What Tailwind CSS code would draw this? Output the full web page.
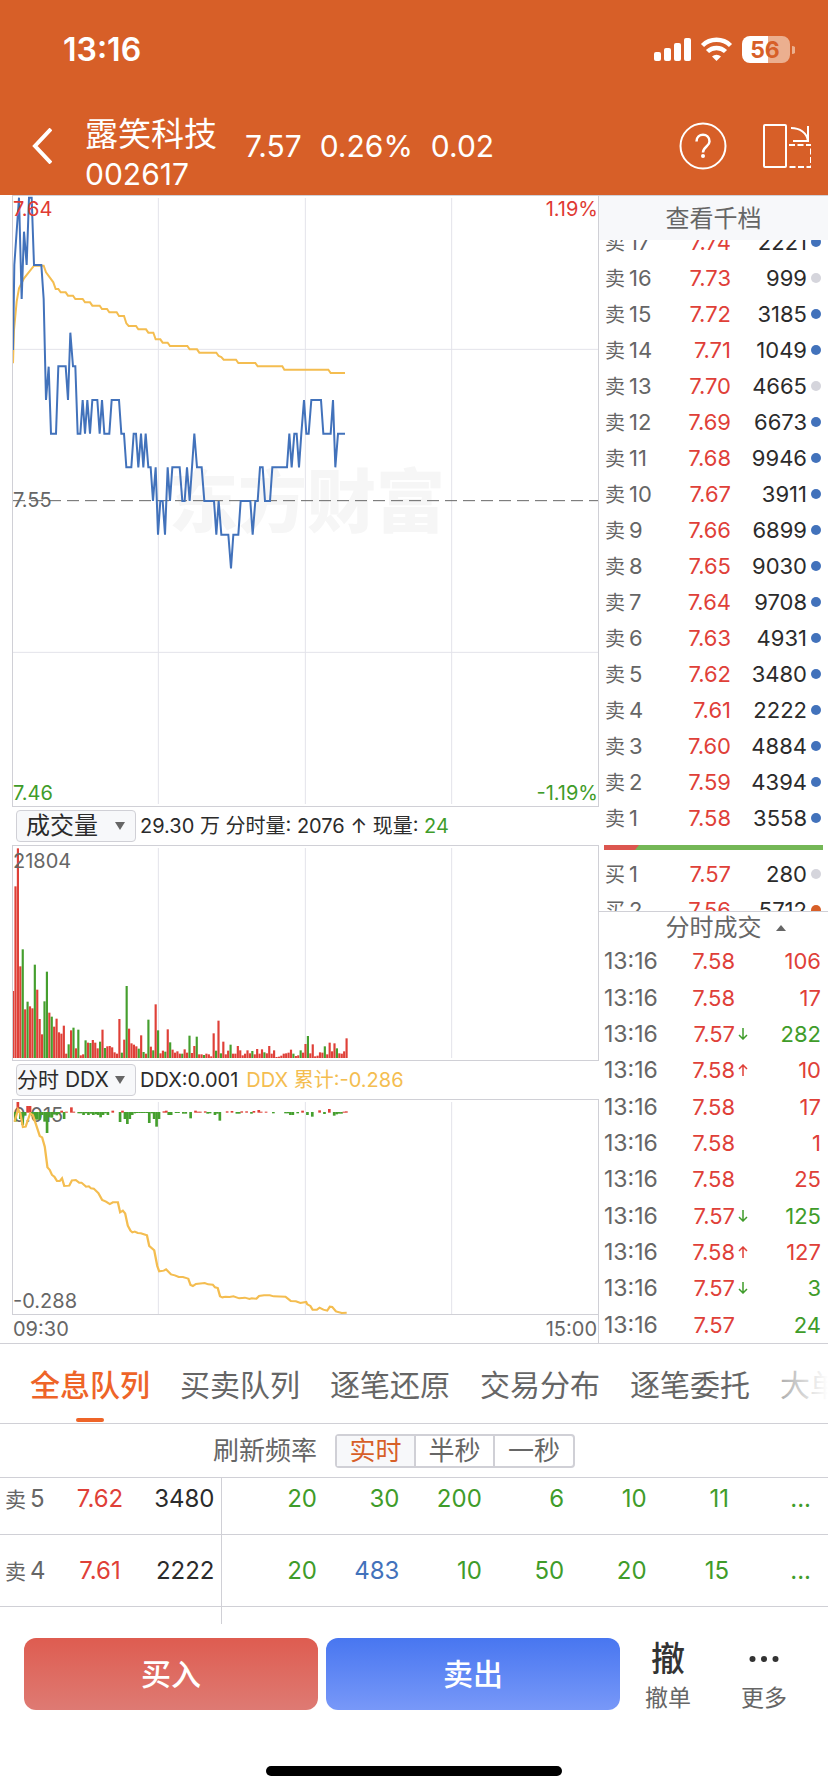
<!DOCTYPE html>
<html lang="zh-CN">

<head>
    <meta charset="UTF-8">
    <meta name="viewport" content="width=device-width, initial-scale=1.0">
    <title>露笑科技 002617</title>
    <script src="https://cdn.jsdelivr.net/npm/@tailwindcss/browser@4"></script>
</head>

<body class="bg-white text-[#2b2b2b] font-['Inter','Noto_Sans_CJK_SC',sans-serif] overflow-x-hidden">
    <header class="bg-[#d75f28] text-white">
        <!-- Status bar -->
        <div class="flex items-center justify-between h-[100px] pl-[63px] pr-[33px]">
            <span class="text-[32px] font-semibold">13:16</span>
            <svg class="w-[142px] h-[28px]" viewBox="0 0 142 28" fill="#fff">
                <rect x="1" y="16" width="7" height="9" rx="2" />
                <rect x="11" y="12" width="7" height="13" rx="2" />
                <rect x="21" y="7" width="7" height="18" rx="2" />
                <rect x="31" y="2" width="7" height="23" rx="2" />
                <path d="M63.500 25l-4.500-4.500a6.500 6.500 0 0 1 9 0z" />
                <path d="M54.500 15.500a13 13 0 0 1 18 0M49.500 9.500a20 20 0 0 1 28 0" fill="none" stroke="#fff" stroke-width="4.500" />
                <path d="M97 0h18v27h-18a8 8 0 0 1-8-8v-11a8 8 0 0 1 8-8z" />
                <path d="M115 0h14a8 8 0 0 1 8 8v11a8 8 0 0 1-8 8h-14zM139 10a4 4 0 0 1 0 8z" fill="#ebaf8f" />
                <text x="112" y="22" text-anchor="middle" font-size="23" font-weight="700" fill="#d75f28">56</text>
            </svg>
        </div>
        <!-- Stock title -->
        <div class="flex items-center h-[95px] pl-8 pr-[17px] pb-1">
            <button aria-label="返回">
                <svg class="w-5 h-9" viewBox="0 0 20 36" fill="none" stroke="#fff" stroke-width="4">
                    <path d="M19 1L3 18l16 17" />
                </svg>
            </button>
            <div class="ml-[33px] mt-4 leading-[40px]">
                <h1 class="text-[33px]">露笑科技</h1>
                <p class="text-[30px]">002617</p>
            </div>
            <div class="flex gap-[18px] ml-7 text-[30px] leading-[40px]">
                <span>7.57</span>
                <span>0.26%</span>
                <span>0.02</span>
            </div>
            <button class="ml-auto" aria-label="帮助">
                <svg class="size-[48px]" viewBox="0 0 48 48" fill="none" stroke="#fff" stroke-width="2">
                    <circle cx="24" cy="24" r="22.500" />
                    <path d="M17.500 19.500c0-9 13-9 13 0c0 5-6.500 5-6.500 11" stroke-width="2.500" />
                    <circle cx="24" cy="34" r="2" fill="#fff" stroke="none" />
                </svg>
            </button>
            <button class="ml-9" aria-label="横屏">
                <svg class="w-[48px] h-[46px]" viewBox="0 0 48 46" fill="none" stroke="#fff" stroke-width="2">
                    <rect x="1" y="2" width="22" height="42" rx="1" />
                    <path d="M28 5c9 0 16 5 17 13M45 3v15H30" />
                    <path d="M26 22h22v22H24" stroke-dasharray="6 2.500" />
                </svg>
            </button>
        </div>
    </header>

    <main>
        <section class="flex border-b border-[#d0d0d6]">
            <!-- Charts -->
            <div class="flex-1 min-w-0 pl-3 text-xl text-[#666]">
                <div class="relative h-[612px] border border-[#d0d0d6]">
                    <div class="absolute top-[266px] left-[156px] text-[69px] leading-[80px] font-black text-[#f6f6f6]">东方财富</div>
                    <svg class="absolute inset-0 size-full" viewBox="39 18 1755 1830" preserveAspectRatio="none" fill="none">
                        <g stroke="#e3e3ea" stroke-width="3">
                            <path d="M475 24V1842M916 24V1842M1355 24V1842M39 478H1794M39 1387H1794" />
                        </g>
                        <path d="M39 932H1794" stroke="#666" stroke-width="3" stroke-dasharray="36 18" />
                        <polyline stroke="#f4bd50" stroke-width="6" points="39,520 42,420 50,335 57,295 72,265 102,227 131,227 138,247 160,277 167,297 175,297 182,307 197,307 204,317 219,317 226,327 248,327 255,337 270,337 277,347 299,347 306,357 321,357 328,367 350,367 357,378 372,378 379,400 386,408 408,408 415,418 438,418 445,428 460,428 467,448 481,448 488,458 503,458 510,468 562,468 569,478 591,478 598,488 649,488 656,498 664,501 671,509 708,509 715,519 766,519 773,529 847,529 853,539 985,539 992,549 1035,549" />
                        <polyline stroke="#4272bb" stroke-width="6" points="39,480 43,225 57,23 65,327 72,125 80,225 87,23 95,23 102,225 124,225 131,327 138,630 146,530 153,731 168,731 175,529 197,529 204,630 211,428 219,529 226,529 233,731 241,731 248,630 255,731 262,630 270,731 277,630 292,630 299,731 306,630 313,731 328,731 335,630 357,630 364,731 372,731 379,832 394,832 401,731 408,731 415,832 423,731 430,832 437,731 445,832 452,832 459,933 467,832 474,1034 481,933 488,933 495,1034 503,832 510,933 517,832 539,832 547,933 554,933 561,832 569,933 583,731 591,832 605,832 613,933 642,933 649,1034 656,933 664,1034 685,1034 693,1135 700,1034 715,1034 722,933 751,933 758,1034 766,933 773,933 780,832 788,832 795,933 810,933 817,832 861,832 868,731 875,832 883,731 890,731 897,832 904,731 912,630 919,731 926,731 934,630 963,630 970,731 992,731 999,630 1006,832 1014,731 1035,731" />
                    </svg>
                    <span class="absolute top-0 left-0 leading-[26px] text-[#e03a33]">7.64</span>
                    <span class="absolute top-0 right-0 leading-[26px] text-[#e03a33]">1.19%</span>
                    <span class="absolute top-[291px] left-0 leading-[26px]">7.55</span>
                    <span class="absolute bottom-0 left-0 leading-[26px] text-[#3f9c2a]">7.46</span>
                    <span class="absolute bottom-0 right-0 leading-[26px] text-[#3f9c2a]">-1.19%</span>
                </div>

                <div class="flex items-center h-[38px] pl-1 gap-1 whitespace-nowrap">
                    <div class="relative">
                        <select aria-label="副图指标一" class="appearance-none w-[120px] h-8 pl-[9px] rounded border border-[#d0d0d6] bg-[#f7f8fa] text-2xl leading-7 text-[#2b2b2b]">
                            <option>成交量</option>
                        </select>
                        <svg class="absolute top-3 right-[11px] w-[10px] h-2 pointer-events-none" viewBox="0 0 10 8" fill="#666"><path d="M0 0h10l-5 8z" /></svg>
                    </div>
                    <p class="text-[#2b2b2b]">29.30 万 分时量: 2076 ↑ 现量: <span class="text-[#3f9c2a]">24</span></p>
                </div>

                <div class="relative h-[216px] border border-[#d0d0d6]">
                    <svg class="absolute inset-0 size-full" viewBox="39 168 1755 642" preserveAspectRatio="none">
                        <path d="M475 174V804M916 174V804M1355 174V804" stroke="#e3e3ea" stroke-width="3" />
                        <g id="volBars"></g>
                    </svg>
                    <span class="absolute top-[2px] left-0 leading-[26px]">21804</span>
                </div>

                <div class="flex items-center h-[38px] pl-1 gap-1 whitespace-nowrap">
                    <div class="relative">
                        <select aria-label="副图指标二" class="appearance-none w-[120px] h-8 rounded border border-[#d0d0d6] bg-[#f7f8fa] text-[21px] leading-7 text-[#2b2b2b]">
                            <option>分时 DDX</option>
                        </select>
                        <svg class="absolute top-3 right-[11px] w-[10px] h-2 pointer-events-none" viewBox="0 0 10 8" fill="#666"><path d="M0 0h10l-5 8z" /></svg>
                    </div>
                    <p class="flex gap-2 text-[#2b2b2b]"><span>DDX:0.001</span><span class="text-[#f4bd50]">DDX 累计:-0.286</span></p>
                </div>

                <div class="relative h-[216px] border border-[#d0d0d6]">
                    <span class="absolute top-[2px] left-0 leading-[26px]">0.015</span>
                    <span class="absolute bottom-0 left-0 leading-[26px]">-0.288</span>
                    <svg class="absolute inset-0 size-full" viewBox="39 150 1755 642" preserveAspectRatio="none" fill="none">
                        <path d="M475 156V792M916 156V792M1355 156V792" stroke="#e3e3ea" stroke-width="3" />
                        <g id="ddxBars"></g>
                        <g transform="scale(1.148 1)">
                            <polyline stroke="#f4bd50" stroke-width="6" points="38,215 47,178 53,190 60,231 67,230 79,190 86,195 104,258 110,262 117,290 124,352 130,360 136,375 142,380 149,393 156,393 162,385 168,408 181,407 188,391 198,390 207,398 213,398 225,410 232,409 238,415 245,416 257,429 267,450 277,455 287,462 295,457 308,457 314,487 321,482 327,490 334,527 341,542 346,547 352,545 360,549 368,550 384,556 390,588 403,601 411,648 416,664 428,662 434,658 447,673 457,676 467,681 478,681 492,686 498,705 504,708 512,702 535,699 544,703 556,704 562,712 569,714 575,739 581,742 589,740 600,741 610,739 625,745 640,743 652,747 658,745 670,746 677,738 690,736 705,736 715,739 746,740 760,753 773,754 785,759 800,756 803,763 811,768 817,779 828,779 835,773 845,779 855,782 862,770 868,771 878,784 893,789 906,788" />
                        </g>
                    </svg>
                </div>
                <div class="flex justify-between h-7 leading-7 px-px border-r border-[#d0d0d6]">
                    <span>09:30</span>
                    <span>15:00</span>
                </div>
            </div>

            <!-- Order book -->
            <aside class="w-[229px] shrink-0 text-[22px] leading-7 border-t border-[#d0d0d6]">
                <button class="block w-full h-11 pt-[2px] bg-[#f7f8fa] text-2xl text-[#666]">查看千档</button>
                <div class="h-[671px] overflow-hidden">
                    <table class="w-full -mt-4">
                        <tbody id="asks"></tbody>
                    </table>
                    <div class="h-5 pt-[9px] pl-[5px] pr-[5px]">
                        <svg class="w-full h-[5px]" viewBox="0 0 219 5" preserveAspectRatio="none">
                            <path d="M0 0h219v5h-219z" fill="#74b756" />
                            <path d="M0 0h35l-4 5h-31z" fill="#dc564f" />
                        </svg>
                    </div>
                    <table class="w-full">
                        <tbody id="bids"></tbody>
                    </table>
                </div>
                <button class="flex items-center justify-center gap-[14px] w-full h-8 pl-[24px] border-t border-[#d0d0d6] text-2xl text-[#666]">
                    分时成交
                    <svg class="w-[10px] h-[6px]" viewBox="0 0 10 6" fill="#666"><path d="M0 6l5-6l5 6z" /></svg>
                </button>
                <table class="w-full h-[400px]">
                    <tbody id="trades"></tbody>
                </table>
            </aside>
        </section>

        <!-- Tabs -->
        <nav class="relative flex gap-[30px] h-20 pl-[30px] overflow-hidden whitespace-nowrap border-b border-[#d0d0d6] text-[30px] text-[#666]">
            <a href="#" class="flex flex-col items-center shrink-0 font-medium text-[#ee6428]">
                <span class="leading-[82px] h-[74px]">全息队列</span>
                <span class="w-7 h-1 shrink-0 rounded-full bg-[#ee6428]"></span>
            </a>
            <a href="#" class="leading-[82px] shrink-0">买卖队列</a>
            <a href="#" class="leading-[82px] shrink-0">逐笔还原</a>
            <a href="#" class="leading-[82px] shrink-0">交易分布</a>
            <a href="#" class="leading-[82px] shrink-0">逐笔委托</a>
            <a href="#" class="leading-[82px] shrink-0">大单</a>
            <div class="absolute inset-y-0 right-0 w-[72px] bg-linear-to-r from-white/20 to-white"></div>
        </nav>

        <!-- Refresh rate -->
        <div class="flex items-center justify-center gap-[18px] h-[54px] pr-10 border-b border-[#d0d0d6] text-[26px] text-[#666]">
            <span>刷新频率</span>
            <div class="flex h-[34px] rounded border-2 border-[#d0d0d6] leading-[28px] divide-x-2 divide-[#d0d0d6]">
                <button class="w-[79px] bg-[#f7f8fa] text-[#d75f28]">实时</button>
                <button class="w-[79px]">半秒</button>
                <button class="w-[78px]">一秒</button>
            </div>
        </div>

        <!-- Order queue -->
        <div class="h-[146px] overflow-hidden">
            <table class="w-full table-fixed -mt-4 text-2xl text-right text-[#3f9c2a]">
                <colgroup>
                    <col class="w-[60px]">
                    <col class="w-[80px]">
                    <col class="w-[81px]">
                    <col class="w-[96px]">
                    <col span="5">
                    <col class="w-[99px]">
                </colgroup>
                <tbody id="queue"></tbody>
            </table>
        </div>
    </main>

    <footer class="pt-[14px] pb-4">
        <div class="flex gap-2 pl-6 pr-4">
            <button class="flex-1 h-[72px] rounded-xl bg-linear-to-b from-[#de5c50] to-[#de7a73] text-[30px] font-medium text-white">买入</button>
            <button class="flex-1 h-[72px] rounded-xl bg-linear-to-b from-[#4876f0] to-[#7898f8] text-[30px] font-medium text-white">卖出</button>
            <button class="flex flex-col items-center w-[80px] h-[72px] text-[#666]">
                <span class="h-[44px] shrink-0 text-[34px] leading-[42px] font-medium text-[#333]">撤</span>
                <span class="text-[23px] leading-[32px]">撤单</span>
            </button>
            <button class="flex flex-col items-center w-[96px] h-[72px] text-[#666]">
                <svg class="w-[30px] h-[44px] shrink-0" viewBox="0 0 30 44" fill="#333">
                    <circle cx="3.500" cy="21" r="3" />
                    <circle cx="15" cy="21" r="3" />
                    <circle cx="26.500" cy="21" r="3" />
                </svg>
                <span class="text-[23px] leading-[32px]">更多</span>
            </button>
        </div>
        <div class="w-[296px] h-[10px] mx-auto mt-14 rounded-full bg-black"></div>
    </footer>

    <script>
        const RED = "#df4038";
        const GREEN = "#459f2e";

        // Volume per minute, "-" marks a falling minute
        const volume = [201, 515, 629, 275, -326, 146, -169, 155, 149, -280, 205, 117, 71, -170, -259, 136, -124, 94, 118, 77, 73, 97,
            13, -41, 83, -91, 29, -85, 8, 11, -53, 46, -45, 54, 46, 29, -49, 85, -30, 35, 36, 32, 17, 13, 117, -16, 55, -216, 88, 44,
            40, 35, -28, 68, -18, 13, -115, 34, -23, 161, -83, 14, 22, -19, 86, -47, 25, 16, 20, 13, -13, 26, 16, -67, 15, 36, -64, 11,
            11, -9, 13, 11, 5, 74, -22, 112, -14, 49, 11, 22, -40, 13, 13, 36, 23, 8, 13, 23, 14, -21, 11, 27, 13, 26, -17, 14, 36,
            13, 23, 3, 4, 7, 13, 14, 16, 25, -13, 6, 8, -23, 16, 42, -66, 14, 41, 5, 7, 17, 16, -35, 11, 46, 20, 44, -29, 14, 13, 20, 59];
        document.getElementById("volBars").innerHTML = volume.map((v, i) =>
            `<rect x="${36 + i * 7.25}" y="${804 - Math.abs(v)}" width="6.5" height="${Math.abs(v)}" fill="${v < 0 ? GREEN : RED}"/>`).join("");

        // DDX per minute as [minute, value]
        const ddx = [[1, -28], [2, 31], [3, -20], [4, -38], [5, -10], [6, 19], [7, 19], [8, -10], [9, -22], [10, -22], [11, -22],
            [12, -8], [13, -28], [14, -62], [15, -15], [16, -16], [17, -6], [18, -9], [19, -4], [20, 5], [21, -20], [22, 2], [24, 15],
            [25, 2], [27, -3], [28, -3], [29, -8], [30, -3], [31, -8], [32, -4], [33, -8], [34, -6], [35, -8], [36, -15], [37, -8],
            [38, -3], [39, -8], [41, 5], [44, -29], [45, 5], [46, -20], [47, -35], [48, -20], [49, -8], [50, -3], [51, -2], [52, -2],
            [53, -2], [54, -2], [55, -2], [56, -32], [57, -3], [58, -20], [59, -43], [60, -20], [62, 3], [63, 5], [64, -8], [65, -8],
            [67, -2], [68, -2], [70, -4], [71, -4], [73, -18], [75, 5], [76, 2], [77, 2], [79, 3], [80, -4], [81, -3], [83, -8],
            [84, -4], [85, -25], [88, 3], [90, 4], [92, -4], [93, -4], [94, 3], [96, 3], [98, -4], [99, 4], [101, 7], [102, 2],
            [104, 2], [107, -3], [112, -3], [113, -3], [114, -8], [115, -8], [117, -3], [119, 5], [121, -8], [123, -13], [126, 6],
            [128, -5], [130, 10], [132, -10], [133, -6], [134, -4], [135, -4], [136, 2], [137, 3]];
        document.getElementById("ddxBars").innerHTML = ddx.map(([i, v]) =>
            `<rect x="${35 + i * 7.3}" y="${v > 0 ? 187 - v : 186}" width="8" height="${Math.abs(v) + 1}" fill="${v < 0 ? GREEN : RED}"/>`).join("");

        const dots = { b: "bg-[#4272bb]", g: "bg-[#d5d5dc]", o: "bg-[#d75f28]" };
        const level = ([side, n, price, vol, dot]) => `
            <tr class="h-9">
                <td class="w-[60px] pl-[6px] text-[#666]"><span class="text-xl">${side}</span><span class="ml-1">${n}</span></td>
                <td class="w-[72px] text-right text-[#df4038]">${price}</td>
                <td class="text-right">${vol}</td>
                <td class="w-[21px] pl-1"><span class="block size-[10px] rounded-full ${dots[dot]}"></span></td>
            </tr>`;
        const asks = [[17, 2221, "b"], [16, 999, "g"], [15, 3185, "b"], [14, 1049, "b"], [13, 4665, "g"], [12, 6673, "b"],
            [11, 9946, "b"], [10, 3911, "b"], [9, 6899, "b"], [8, 9030, "b"], [7, 9708, "b"], [6, 4931, "b"], [5, 3480, "b"],
            [4, 2222, "b"], [3, 4884, "b"], [2, 4394, "b"], [1, 3558, "b"]];
        document.getElementById("asks").innerHTML =
            asks.map(([n, vol, dot]) => level(["卖", n, ((757 + n) / 100).toFixed(2), vol, dot])).join("");
        document.getElementById("bids").innerHTML =
            [["买", 1, "7.57", 280, "g"], ["买", 2, "7.56", 5712, "o"]].map(level).join("");

        const trades = [["7.58", "", 106, "r"], ["7.58", "", 17, "r"], ["7.57", "↓", 282, "g"], ["7.58", "↑", 10, "r"],
            ["7.58", "", 17, "r"], ["7.58", "", 1, "r"], ["7.58", "", 25, "r"], ["7.57", "↓", 125, "g"], ["7.58", "↑", 127, "r"],
            ["7.57", "↓", 3, "g"], ["7.57", "", 24, "g"]];
        const tone = { r: "text-[#df4038]", g: "text-[#3f9c2a]" };
        const arrows = { "": "", "↓": "M5 0v11M1 7l4 4l4-4", "↑": "M5 12v-11M1 5l4-4l4 4" };
        document.getElementById("trades").innerHTML = trades.map(([price, arrow, vol, t]) => `
            <tr>
                <td class="w-[64px] pl-[5px] text-[23px] text-[#666]">13:16</td>
                <td class="w-[72px] text-right text-[#df4038]">${price}</td>
                <td class="w-[14px] pl-[3px] ${tone[t]}"><svg class="w-[10px] h-3" viewBox="0 0 10 12" fill="none" stroke="currentColor" stroke-width="1.500"><path d="${arrows[arrow]}"/></svg></td>
                <td class="pr-[7px] text-right ${tone[t]}">${vol}</td>
            </tr>`).join("");

        const queue = [[5, "7.62", 3480, [20, 30, 200, 6, 10, 11]], [4, "7.61", 2222, [20, 483, 10, 50, 20, 15]]];
        document.getElementById("queue").innerHTML = queue.map(([n, price, vol, lots]) => `
            <tr class="h-[72px] border-b border-[#d0d0d6]">
                <td class="pt-[2px] pl-[5px] text-left text-[#666]"><span class="text-[21px]">卖</span><span class="ml-1">${n}</span></td>
                <td class="pt-[2px] text-center text-[#df4038]">${price}</td>
                <td class="pt-[2px] pr-[6px] border-r border-[#d0d0d6] text-[#2b2b2b]">${vol}</td>
                ${lots.map(l => `<td class="pt-[2px] ${l > 400 ? "text-[#4272bb]" : ""}">${l}</td>`).join("")}
                <td class="pt-[2px] pr-[17px]">...</td>
            </tr>`).join("") + `<tr class="h-[18px]"><td colspan="3" class="border-r border-[#d0d0d6]"></td></tr>`;
    </script>
</body>

</html>
